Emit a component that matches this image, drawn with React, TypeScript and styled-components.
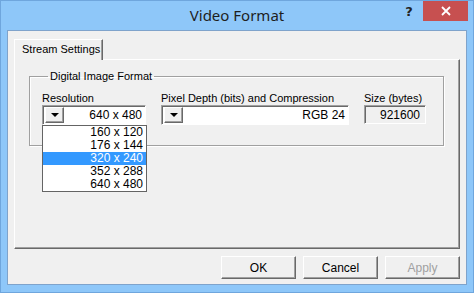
import styled, { createGlobalStyle } from "styled-components";

const GlobalStyle = createGlobalStyle`
  html, body {
    margin: 0;
    padding: 0;
    background: #8ec7f9;
  }
  * {
    box-sizing: border-box;
  }
`;

const Window = styled.div`
  width: 474px;
  height: 293px;
  display: flex;
  flex-direction: column;
  background: #8ec7f9;
  border: 1px solid #6fa6dd;
  font-family: "Liberation Sans", Arial, sans-serif;
  font-size: 11px;
  color: #000;
`;

const TitleBar = styled.div`
  height: 29px;
  display: flex;
  align-items: flex-start;
`;

const Title = styled.div`
  flex: 1;
  text-align: center;
  font-family: "Noto Sans", "Open Sans", sans-serif;
  font-size: 15px;
  line-height: 28px;
  color: #1e1e1e;
  padding-left: 78px;
`;

const HelpButton = styled.div`
  width: 28px;
  height: 20px;
  font-family: "DejaVu Sans", sans-serif;
  font-weight: bold;
  font-size: 13px;
  line-height: 22px;
  text-align: center;
  color: #222;
`;

const CloseButton = styled.div`
  width: 45px;
  height: 20px;
  margin-right: 5px;
  background: #c75050;
  display: flex;
  align-items: center;
  justify-content: center;
`;

const Client = styled.div`
  flex: 1;
  margin: 0 6px 7px 6px;
  background: #f0f0f0;
  border: 1px solid #7fa3cb;
  display: flex;
  flex-direction: column;
  padding: 8px 6px 5px 6px;
`;

const TabStrip = styled.div`
  display: flex;
  height: 20px;
`;

const Tab = styled.div`
  width: 89px;
  height: 21px;
  border-top: 1px solid #fff;
  border-left: 1px solid #fff;
  border-right: 1px solid #696969;
  box-shadow: inset -1px 0 0 #a0a0a0;
  padding: 3px 0 0 7px;
  background: #f0f0f0;
  position: relative;
  z-index: 1;
`;

const Panel = styled.div`
  height: 190px;
  border-top: 1px solid #fff;
  border-left: 1px solid #fff;
  border-right: 1px solid #696969;
  border-bottom: 1px solid #696969;
  box-shadow: inset -1px -1px 0 #a0a0a0;
  padding: 10px 14px 0 14px;
`;

const Group = styled.fieldset`
  margin: 0;
  width: 415px;
  height: 76px;
  border: 1px solid #a0a0a0;
  box-shadow: 1px 1px 0 #fff, inset 1px 1px 0 #fff;
  padding: 9px 0 0 12px;
  display: flex;
  gap: 15px;
`;

const Legend = styled.legend`
  padding: 0 2px;
  margin-left: 6px;
  line-height: 13px;
`;

const Field = styled.div<{ $w: number }>`
  width: ${(p) => p.$w}px;
  display: flex;
  flex-direction: column;
  position: relative;
`;

const Label = styled.div`
  line-height: 13px;
  height: 13px;
  white-space: nowrap;
`;

const Combo = styled.div`
  height: 20px;
  background: #fff;
  border-top: 1px solid #a0a0a0;
  border-left: 1px solid #a0a0a0;
  border-right: 1px solid #fff;
  border-bottom: 1px solid #fff;
  box-shadow: inset 1px 1px 0 #696969;
  display: flex;
  align-items: center;
  padding: 1px 3px 1px 2px;
`;

const ComboButton = styled.div`
  width: 19px;
  height: 16px;
  background: #f0f0f0;
  border-top: 1px solid #fff;
  border-left: 1px solid #fff;
  border-right: 1px solid #696969;
  border-bottom: 1px solid #696969;
  box-shadow: inset -1px -1px 0 #a0a0a0;
  display: flex;
  align-items: center;
  justify-content: center;
`;

const Arrow = styled.div`
  width: 0;
  height: 0;
  border-left: 4px solid transparent;
  border-right: 4px solid transparent;
  border-top: 4px solid #000;
`;

const ComboText = styled.div`
  flex: 1;
  text-align: right;
  font-size: 12px;
`;

const ReadOnly = styled.div`
  height: 19px;
  background: #f0f0f0;
  border-top: 1px solid #a0a0a0;
  border-left: 1px solid #a0a0a0;
  border-right: 1px solid #fff;
  border-bottom: 1px solid #fff;
  box-shadow: inset 1px 1px 0 #696969;
  text-align: right;
  padding: 2px 5px 0 0;
  font-size: 12px;
`;

const DropList = styled.div`
  position: absolute;
  top: 33px;
  left: 0;
  width: 105px;
  background: #fff;
  border: 1px solid #646464;
  z-index: 2;
`;

const Item = styled.div<{ $sel?: boolean }>`
  height: 13px;
  line-height: 13px;
  text-align: right;
  padding-right: 3px;
  font-size: 12px;
  background: ${(p) => (p.$sel ? "#3399ff" : "transparent")};
  color: ${(p) => (p.$sel ? "#fff" : "#000")};
`;

const Buttons = styled.div`
  display: flex;
  justify-content: flex-end;
  gap: 7px;
  margin-top: 7px;
`;

const Button = styled.div<{ $disabled?: boolean }>`
  width: 75px;
  height: 23px;
  border-top: 1px solid #fff;
  border-left: 1px solid #fff;
  border-right: 1px solid #696969;
  border-bottom: 1px solid #696969;
  box-shadow: inset -1px -1px 0 #a0a0a0;
  display: flex;
  align-items: center;
  justify-content: center;
  font-size: 12px;
  color: ${(p) => (p.$disabled ? "#a0a0a0" : "#000")};
`;

const resolutions = ["160 x 120", "176 x 144", "320 x 240", "352 x 288", "640 x 480"];

export default function App() {
  return (
    <>
      <GlobalStyle />
      <Window>
        <TitleBar>
          <Title>Video Format</Title>
          <HelpButton>?</HelpButton>
          <CloseButton>
            <svg width="10" height="10" viewBox="0 0 10 10">
              <path d="M1 1 L9 9 M9 1 L1 9" stroke="#fff" strokeWidth="1.8" />
            </svg>
          </CloseButton>
        </TitleBar>
        <Client>
          <TabStrip>
            <Tab>Stream Settings</Tab>
          </TabStrip>
          <Panel>
            <Group>
              <Legend>Digital Image Format</Legend>
              <Field $w={104}>
                <Label>Resolution</Label>
                <Combo>
                  <ComboButton>
                    <Arrow />
                  </ComboButton>
                  <ComboText>640 x 480</ComboText>
                </Combo>
                <DropList>
                  {resolutions.map((r) => (
                    <Item key={r} $sel={r === "320 x 240"}>
                      {r}
                    </Item>
                  ))}
                </DropList>
              </Field>
              <Field $w={188}>
                <Label>Pixel Depth (bits) and Compression</Label>
                <Combo>
                  <ComboButton>
                    <Arrow />
                  </ComboButton>
                  <ComboText>RGB 24</ComboText>
                </Combo>
              </Field>
              <Field $w={62}>
                <Label>Size (bytes)</Label>
                <ReadOnly>921600</ReadOnly>
              </Field>
            </Group>
          </Panel>
          <Buttons>
            <Button>OK</Button>
            <Button>Cancel</Button>
            <Button $disabled>Apply</Button>
          </Buttons>
        </Client>
      </Window>
    </>
  );
}
